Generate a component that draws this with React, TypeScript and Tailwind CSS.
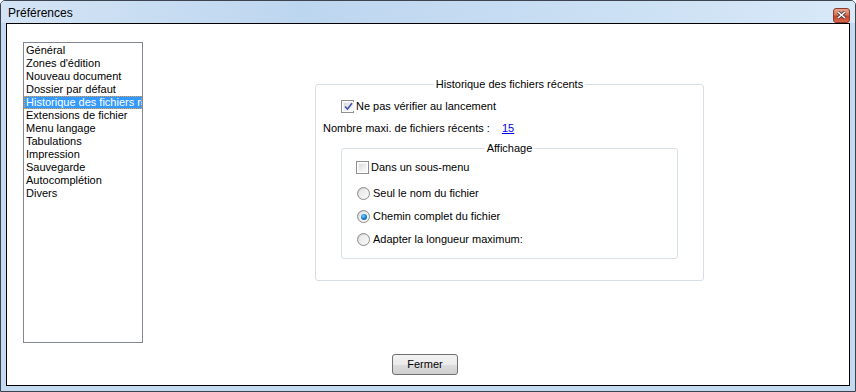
const items = [
  "Général",
  "Zones d'édition",
  "Nouveau document",
  "Dossier par défaut",
  "Historique des fichiers récents",
  "Extensions de fichier",
  "Menu langage",
  "Tabulations",
  "Impression",
  "Sauvegarde",
  "Autocomplétion",
  "Divers",
];

function Checkbox({ checked }: { checked?: boolean }) {
  return (
    <span className="w-[13px] h-[13px] border border-[#8e8f8f] bg-white p-[1px] shrink-0 flex">
      <span className="flex-1 bg-gradient-to-br from-[#dcdcdc] to-[#fbfbfb] border border-[#f4f4f4] flex items-center justify-center">
        {checked && (
          <svg width="9" height="9" viewBox="0 0 9 9">
            <path d="M1 4.5 L3.5 7 L8 1.2" fill="none" stroke="#3b55a8" strokeWidth="1.6" />
          </svg>
        )}
      </span>
    </span>
  );
}

function Radio({ checked }: { checked?: boolean }) {
  return (
    <span className="w-[13px] h-[13px] rounded-full border border-[#8c8c8c] bg-gradient-to-br from-[#c9c9c9] via-[#e9e9e9] to-[#ffffff] flex items-center justify-center shrink-0">
      <span className="w-[9px] h-[9px] rounded-full bg-gradient-to-br from-[#e6e6e6] to-[#f8f8f8] flex items-center justify-center">
        {checked && (
          <span className="w-[6px] h-[6px] rounded-full bg-[radial-gradient(circle_at_40%_35%,#7fd0ff_0%,#1c86d8_45%,#0d3e74_100%)]" />
        )}
      </span>
    </span>
  );
}

export default function App() {
  return (
    <div
      className="w-[856px] h-[392px] border border-[#3d4450] rounded-t-[5px] bg-[#c3daf1] flex flex-col text-[11px] text-black overflow-hidden"
      style={{ fontFamily: '"Liberation Sans", Arial, sans-serif' }}
    >
      {/* Title bar */}
      <div className="h-[22px] shrink-0 flex items-center justify-between pl-[7px] pr-[5px] bg-[linear-gradient(to_right,#d4e4f5_0%,#bdd6ef_35%,#c6dcf2_60%,#d8e9f8_100%)]">
        <span className="text-[12px] leading-[14px] pt-[1px]">Préférences</span>
        <span className="w-[17px] h-[15px] mt-[6px] rounded-[3px] border border-[#8b3b2c] bg-[linear-gradient(to_bottom,#eba48f_0%,#d8735a_45%,#c4432b_55%,#d9674a_100%)] flex items-center justify-center">
          <svg width="9" height="8" viewBox="0 0 9 8">
            <path d="M1 1 L8 7 M8 1 L1 7" stroke="#3a3a3a" strokeWidth="3" />
            <path d="M1 1 L8 7 M8 1 L1 7" stroke="#ffffff" strokeWidth="1.6" />
          </svg>
        </span>
      </div>

      {/* Client area */}
      <div className="flex-1 px-[5px] pb-[5px]">
        <div className="w-full h-full border border-black bg-white flex flex-col">
          <div className="flex pl-[16px] pt-[18px]">
            {/* List */}
            <div className="w-[120px] h-[301px] border border-[#828790] pt-[1px] overflow-hidden">
              {items.map((it, i) => (
                <div
                  key={it}
                  className={
                    i === 4
                      ? "h-[13px] leading-[11px] whitespace-nowrap bg-[#3399ff] text-white border border-dotted border-[#f0a040] pl-[1px]"
                      : "h-[13px] leading-[13px] whitespace-nowrap pl-[2px]"
                  }
                >
                  {it}
                </div>
              ))}
            </div>

            {/* Group */}
            <fieldset className="ml-[172px] mt-[36px] w-[389px] h-[203px] border border-[#d5dfe5] rounded-[3px] px-0">
              <legend align="center" className="mx-auto px-[2px] leading-[13px]">
                Historique des fichiers récents
              </legend>
              <label className="flex items-center gap-[2px] mt-[9px] ml-[25px] h-[13px]">
                <Checkbox checked />
                <span className="leading-[13px]">Ne pas vérifier au lancement</span>
              </label>
              <div className="flex items-center mt-[9px] ml-[7px] h-[13px] leading-[13px]">
                <span>Nombre maxi. de fichiers récents :</span>
                <span className="ml-[12px] text-[#0000ee] underline">15</span>
              </div>

              <fieldset className="ml-[25px] mt-[7px] w-[337px] h-[117px] border border-[#d5dfe5] rounded-[3px] px-0">
                <legend align="center" className="mx-auto px-[2px] leading-[13px]">
                  Affichage
                </legend>
                <label className="flex items-center gap-[2px] mt-[6px] ml-[14px] h-[13px]">
                  <Checkbox />
                  <span className="leading-[13px]">Dans un sous-menu</span>
                </label>
                <label className="flex items-center gap-[3px] mt-[13px] ml-[15px] h-[13px]">
                  <Radio />
                  <span className="leading-[13px]">Seul le nom du fichier</span>
                </label>
                <label className="flex items-center gap-[3px] mt-[10px] ml-[15px] h-[13px]">
                  <Radio checked />
                  <span className="leading-[13px]">Chemin complet du fichier</span>
                </label>
                <label className="flex items-center gap-[3px] mt-[10px] ml-[15px] h-[13px]">
                  <Radio />
                  <span className="leading-[13px]">Adapter la longueur maximum:</span>
                </label>
              </fieldset>
            </fieldset>
          </div>

          <div className="pl-[385px] mt-[11px]">
            <button className="w-[66px] h-[21px] rounded-[3px] border border-[#707070] bg-[linear-gradient(to_bottom,#f2f2f2_0%,#ebebeb_50%,#dddddd_50%,#cfcfcf_100%)] text-[11px] leading-[19px] text-center">
              Fermer
            </button>
          </div>
        </div>
      </div>
    </div>
  );
}
